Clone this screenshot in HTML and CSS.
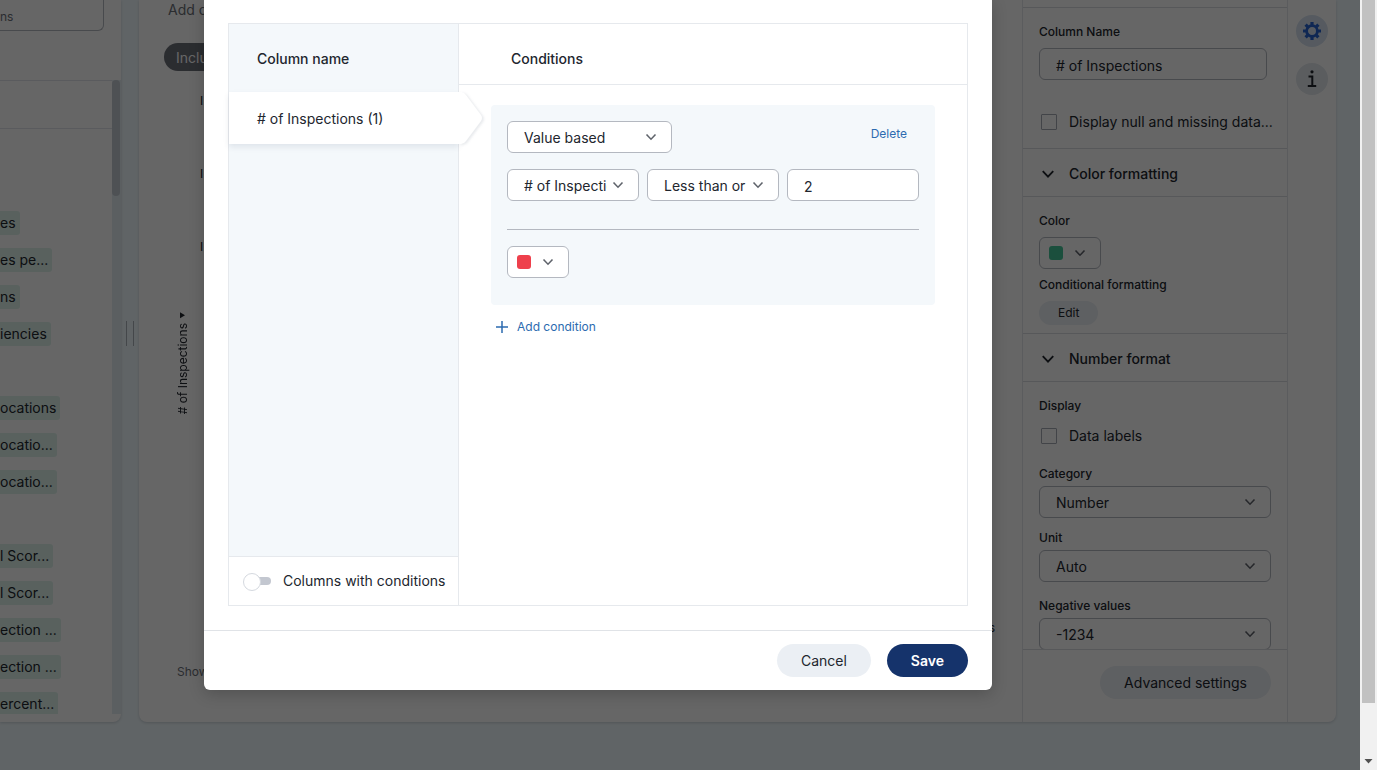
FILE: index.html
```html
<!DOCTYPE html>
<html lang="en">
<head>
    <meta charset="UTF-8">
    <meta name="viewport" content="width=device-width, initial-scale=1.0">
    <title>Conditional formatting</title>
    <link rel="stylesheet" href="styles.css">
</head>
<body>
    <svg class="symbols" aria-hidden="true">
        <symbol id="chevron" viewBox="0 0 12 12">
            <path d="M1.5 3.5L6 8.2L10.5 3.5" fill="none" stroke="currentColor" stroke-width="1.6"/>
        </symbol>
    </svg>

    <div class="viewport">
        <div class="workspace">
            <aside class="fields">
                <div class="fields-search">
                    <input type="text" value="ns" aria-label="Search fields">
                </div>
                <div class="fields-body">
                    <div class="fields-list">
                        <div class="fields-group"></div>
                        <ul>
                            <li></li>
                            <li></li>
                            <li><span class="tag">es</span></li>
                            <li><span class="tag">es pe...</span></li>
                            <li><span class="tag">ns</span></li>
                            <li><span class="tag">iencies</span></li>
                            <li></li>
                            <li><span class="tag">ocations</span></li>
                            <li><span class="tag">ocatio...</span></li>
                            <li><span class="tag">ocatio...</span></li>
                            <li></li>
                            <li><span class="tag">l Scor...</span></li>
                            <li><span class="tag">l Scor...</span></li>
                            <li><span class="tag">ection ...</span></li>
                            <li><span class="tag">ection ...</span></li>
                            <li><span class="tag">ercent...</span></li>
                        </ul>
                    </div>
                    <div class="fields-scroll"><div class="fields-thumb"></div></div>
                </div>
            </aside>

            <div class="splitter"><span></span></div>

            <main class="panel">
                <div class="chart">
                    <div class="chart-filter">Add c</div>
                    <div class="chart-chip">Inclu</div>
                    <div class="chart-plot">
                        <div class="axis-title"># of Inspections
                            <svg width="8" height="8" viewBox="0 0 8 8"><path d="M7 1V7L2 4Z" fill="currentColor"/></svg>
                        </div>
                        <div class="axis-ticks">
                            <span>I</span>
                            <span>I</span>
                            <span>I</span>
                        </div>
                        <div class="axis-end">s</div>
                    </div>
                    <div class="chart-footer">Show</div>
                </div>

                <section class="settings">
                    <div class="settings-scroll">
                        <div class="settings-section">
                            <label class="label" for="colname">Column Name</label>
                            <input class="input" id="colname" type="text" value="# of Inspections">
                            <label class="check check-null"><input type="checkbox"><span>Display null and missing data...</span></label>
                        </div>
                        <button class="settings-head"><svg width="14" height="14"><use href="#chevron"/></svg>Color formatting</button>
                        <div class="settings-section color-section">
                            <span class="label">Color</span>
                            <button class="color-select" aria-label="Color"><i class="swatch green"></i><svg width="12" height="12"><use href="#chevron"/></svg></button>
                            <span class="label">Conditional formatting</span>
                            <button class="pill pill-small">Edit</button>
                        </div>
                        <button class="settings-head"><svg width="14" height="14"><use href="#chevron"/></svg>Number format</button>
                        <div class="settings-section number-section">
                            <span class="label">Display</span>
                            <label class="check"><input type="checkbox"><span>Data labels</span></label>
                            <label class="label" for="category">Category</label>
                            <div class="select">
                                <select id="category"><option>Number</option></select>
                                <svg width="12" height="12"><use href="#chevron"/></svg>
                            </div>
                            <label class="label" for="unit">Unit</label>
                            <div class="select">
                                <select id="unit"><option>Auto</option></select>
                                <svg width="12" height="12"><use href="#chevron"/></svg>
                            </div>
                            <label class="label label-gap" for="negative">Negative values</label>
                            <div class="select">
                                <select id="negative"><option>-1234</option></select>
                                <svg width="12" height="12"><use href="#chevron"/></svg>
                            </div>
                        </div>
                    </div>
                    <div class="settings-footer">
                        <button class="pill">Advanced settings</button>
                    </div>
                </section>

                <nav class="rail">
                    <button class="rail-button active" aria-label="Settings">
                        <svg width="20" height="20" viewBox="0 0 20 20" fill="none" stroke="currentColor">
                            <circle cx="10" cy="10" r="5.4" stroke-width="2.8"/>
                            <g stroke-width="3.2">
                                <path d="M10 1V4M10 16V19M1 10H4M16 10H19"/>
                                <path d="M3.6 3.6L5.8 5.8M14.2 14.2L16.4 16.4M3.6 16.4L5.8 14.2M14.2 5.8L16.4 3.6"/>
                            </g>
                        </svg>
                    </button>
                    <button class="rail-button" aria-label="Information">
                        <svg width="20" height="20" viewBox="0 0 20 20">
                            <circle cx="10" cy="2.8" r="1.6" fill="currentColor"/>
                            <path d="M6.5 7.5H10.3V17M5.8 17H14.2" fill="none" stroke="currentColor" stroke-width="2"/>
                        </svg>
                    </button>
                </nav>
            </main>
        </div>

        <div class="overlay">
            <div class="modal" role="dialog" aria-label="Conditional formatting">
                <div class="modal-body">
                    <div class="rules">
                        <div class="columns">
                            <h3 class="columns-title">Column name</h3>
                            <button class="column-item"># of Inspections (1)
                                <svg class="column-arrow" width="26" height="52" viewBox="0 0 26 52"><path d="M0 0H2Q5 0 7 3L22 23Q24 26 22 29L7 49Q5 52 2 52H0Z" fill="#fff"/></svg>
                            </button>
                            <label class="columns-toggle">
                                <input type="checkbox" class="toggle">
                                Columns with conditions
                            </label>
                        </div>
                        <div class="conditions">
                            <h3 class="conditions-title">Conditions</h3>
                            <div class="condition">
                                <div class="condition-top">
                                    <div class="select select-type">
                                        <select aria-label="Condition type"><option>Value based</option></select>
                                        <svg width="12" height="12"><use href="#chevron"/></svg>
                                    </div>
                                    <a class="link" href="#">Delete</a>
                                </div>
                                <div class="condition-row">
                                    <div class="select">
                                        <select aria-label="Column"><option># of Inspections</option></select>
                                        <svg width="12" height="12"><use href="#chevron"/></svg>
                                    </div>
                                    <div class="select">
                                        <select aria-label="Operator"><option>Less than or equal to</option></select>
                                        <svg width="12" height="12"><use href="#chevron"/></svg>
                                    </div>
                                    <input class="input" type="text" value="2" aria-label="Value">
                                </div>
                                <hr>
                                <button class="color-select" aria-label="Condition color"><i class="swatch red"></i><svg width="12" height="12"><use href="#chevron"/></svg></button>
                            </div>
                            <a class="link add" href="#">
                                <svg width="12" height="12" viewBox="0 0 12 12"><path d="M6 0V12M0 6H12" stroke="currentColor" stroke-width="1.5"/></svg>
                                Add condition
                            </a>
                        </div>
                    </div>
                </div>
                <div class="modal-footer">
                    <button class="pill">Cancel</button>
                    <button class="pill pill-primary">Save</button>
                </div>
            </div>
        </div>
    </div>

    <div class="page-scroll">
        <div class="page-thumb"></div>
        <svg width="9" height="5" viewBox="0 0 9 5"><path d="M0.5 0H8.5L4.5 4.5Z" fill="#505050"/></svg>
    </div>
</body>
</html>
```
FILE: styles.css
```css
* {
    box-sizing: border-box;
}
body {
    margin: 0;
    height: 100vh;
    display: flex;
    overflow: hidden;
    font-family: Inter, "Liberation Sans", sans-serif;
    font-size: 14px;
    line-height: 20px;
    color: #22262e;
}
button, input, select {
    font: inherit;
    color: inherit;
    margin: 0;
}
button {
    border: none;
    background: none;
    padding: 0;
    cursor: pointer;
}
ul {
    list-style: none;
    margin: 0;
    padding: 0;
}
h3 {
    margin: 0;
    font-size: 14px;
    font-weight: 500;
}
.symbols {
    position: absolute;
    width: 0;
    height: 0;
}
.viewport {
    flex: 1;
    min-width: 0;
    position: relative;
}
.workspace {
    height: 100%;
    display: flex;
    padding: 0 24px 48px 0;
    background: #f1fafe;
}

/* shared controls */
.input, .select select {
    width: 100%;
    height: 32px;
    padding: 2px 16px 0;
    border: 1px solid #b4b8c0;
    border-radius: 6px;
    background: #fff;
}
.select {
    position: relative;
}
.select select {
    display: block;
    appearance: none;
    padding-right: 31px;
}
.select svg {
    position: absolute;
    right: 15px;
    top: 10px;
    color: #5f636b;
    pointer-events: none;
}
.color-select {
    display: flex;
    align-items: center;
    gap: 11px;
    width: 62px;
    height: 32px;
    padding-left: 9px;
    border: 1px solid #b4b8c0;
    border-radius: 6px;
    background: #fff;
    color: #5f636b;
}
.swatch {
    width: 14px;
    height: 14px;
    border-radius: 3px;
}
.red {
    background: #ee404c;
}
.green {
    background: #45c598;
}
.pill {
    height: 33px;
    padding: 0 24px;
    border-radius: 17px;
    background: #ebeff4;
}
.pill-small {
    align-self: flex-start;
    height: 24px;
    padding: 0 19px;
    font-size: 12px;
}
.pill-primary {
    background: #15336b;
    color: #fff;
    font-weight: 600;
}
.link {
    color: #2c6bb0;
    font-size: 12px;
    text-decoration: none;
}

/* field list */
.fields {
    width: 121px;
    display: flex;
    flex-direction: column;
    background: #fff;
    border-radius: 0 0 8px 0;
    box-shadow: 0 1px 3px #c8d2da;
    overflow: hidden;
}
.fields-search {
    height: 80px;
    padding-right: 17px;
}
.fields-search input {
    width: 100%;
    height: 31px;
    padding: 2px 0 0;
    border: 1px solid #b4b8c0;
    border-width: 0 1px 1px 0;
    border-radius: 0 0 6px 0;
    background: #fff;
    color: #6b7078;
    font-size: 12px;
}
.fields-body {
    flex: 1;
    min-height: 0;
    display: flex;
    padding-bottom: 8px;
}
.fields-list {
    flex: 1;
    overflow: hidden;
    border-top: 1px solid #e0e4ea;
}
.fields-group {
    height: 48px;
    border-bottom: 1px solid #e0e4ea;
    margin-bottom: 1px;
}
.fields-list li {
    height: 37px;
    display: flex;
    align-items: center;
}
.tag {
    padding: 2px 4px 2px 0;
    border-radius: 0 3px 3px 0;
    background: #def3ec;
}
.fields-scroll {
    width: 9px;
    background: #e3edf3;
}
.fields-thumb {
    width: 8px;
    height: 116px;
    border-radius: 4px;
    background: #c3cbd2;
}
.splitter {
    width: 18px;
    display: flex;
    align-items: center;
    justify-content: center;
    padding-bottom: 56px;
}
.splitter span {
    width: 8px;
    height: 25px;
    border: 1px solid #aab2b8;
    border-width: 0 1px;
}

/* chart panel */
.panel {
    flex: 1;
    min-width: 0;
    display: flex;
    background: #fff;
    border-radius: 0 0 8px 8px;
    box-shadow: 0 1px 3px #c8d2da;
}
.chart {
    flex: 1;
    display: flex;
    flex-direction: column;
    align-items: flex-start;
    padding-bottom: 40px;
}
.chart-filter {
    padding-left: 29px;
    color: #6b7078;
}
.chart-chip {
    height: 28px;
    margin: 23px 0 0 25px;
    padding: 5px 12px;
    border-radius: 14px;
    background: #6c7079;
    color: #fff;
}
.chart-plot {
    flex: 1;
    align-self: stretch;
    display: flex;
    align-items: center;
    font-size: 12px;
}
.axis-title {
    display: flex;
    align-items: center;
    gap: 4px;
    margin: 0 0 8px 34px;
    writing-mode: vertical-rl;
    transform: rotate(180deg);
}
.axis-ticks {
    align-self: flex-start;
    display: flex;
    flex-direction: column;
    gap: 53px;
    margin: 20px 0 0 7px;
}
.axis-end {
    align-self: flex-end;
    margin: 0 27px 24px auto;
}
.chart-footer {
    padding-left: 38px;
    color: #6b7078;
    font-size: 12px;
}

/* settings */
.settings {
    width: 266px;
    display: flex;
    flex-direction: column;
    border: 1px solid #e3e6ea;
    border-width: 0 1px;
}
.settings-scroll {
    flex: 1;
    min-height: 0;
    padding-top: 7px;
    overflow: hidden;
}
.settings-section {
    display: flex;
    flex-direction: column;
    padding: 16px;
    border-top: 1px solid #d9dde2;
}
.settings-section .input {
    width: auto;
    margin: 8px 4px 0 0;
}
.label {
    font-size: 12px;
    line-height: 16px;
    font-weight: 500;
}
.check {
    display: flex;
    align-items: center;
    gap: 12px;
}
.check input {
    appearance: none;
    flex: none;
    width: 16px;
    height: 16px;
    margin-left: 2px;
    border: 1px solid #a6abb3;
    border-radius: 1px;
    background: #fff;
}
.check span {
    white-space: nowrap;
}
.check-null {
    margin-top: 32px;
}
.settings-head {
    display: flex;
    align-items: center;
    gap: 14px;
    width: 100%;
    height: 48px;
    padding: 2px 18px 0;
    border-top: 1px solid #d9dde2;
    font-weight: 500;
}
.color-section {
    gap: 8px;
    padding-bottom: 8px;
}
.number-section .check {
    margin: 12px 0 8px;
}
.number-section .label + .select {
    margin-top: 4px;
}
.number-section .check + .label,
.number-section .select + .label {
    margin-top: 12px;
}
.number-section .select + .label-gap {
    margin-top: 16px;
}
.settings-footer {
    display: flex;
    justify-content: flex-end;
    padding: 16px 16px 23px;
    border-top: 1px solid #d9dde2;
}
.rail {
    width: 48px;
    display: flex;
    flex-direction: column;
    align-items: center;
    gap: 16px;
    padding-top: 15px;
}
.rail-button {
    display: flex;
    align-items: center;
    justify-content: center;
    width: 32px;
    height: 32px;
    border-radius: 50%;
    background: #e3e8ed;
}
.rail-button.active {
    background: #d6e2f0;
    color: #2763d0;
}

/* modal */
.overlay {
    position: absolute;
    inset: 0;
    display: flex;
    padding: 0 16px 80px 204px;
    background: rgba(0, 0, 0, 0.6);
}
.modal {
    flex: 1;
    max-width: 788px;
    display: flex;
    flex-direction: column;
    background: #fff;
    border-radius: 0 0 6px 6px;
    box-shadow: 0 4px 16px rgba(0, 0, 0, 0.2);
}
.modal-body {
    flex: 1;
    display: flex;
    padding: 23px 24px 24px;
}
.rules {
    flex: 1;
    display: flex;
    border: 1px solid #e6e9ed;
}
.columns {
    width: 230px;
    display: flex;
    flex-direction: column;
    background: #f4f8fb;
    border-right: 1px solid #e6e9ed;
}
.columns-title {
    padding: 25px 28px 23px;
}
.column-item {
    position: relative;
    height: 52px;
    margin-right: -1px;
    padding: 2px 28px 0;
    background: #fff;
    text-align: left;
    box-shadow: 0 3px 6px rgba(40, 60, 90, 0.1);
}
.column-arrow {
    position: absolute;
    left: 100%;
    top: 0;
    filter: drop-shadow(2px 1px 1px rgba(40, 60, 90, 0.1));
}
.columns-toggle {
    display: flex;
    align-items: center;
    gap: 12px;
    height: 49px;
    margin-top: auto;
    padding-left: 14px;
    background: #fff;
    border-top: 1px solid #e6e9ed;
    white-space: nowrap;
}
.toggle {
    appearance: none;
    position: relative;
    width: 28px;
    height: 8px;
    border-radius: 4px;
    background: linear-gradient(90deg, transparent 8px, #c3c7d0 8px);
}
.toggle::before {
    content: "";
    position: absolute;
    left: 0;
    top: -4px;
    width: 16px;
    height: 16px;
    border: 1px solid #d5d9df;
    border-radius: 50%;
    background: #fff;
}
.conditions {
    flex: 1;
    min-width: 0;
}
.conditions-title {
    padding: 25px 52px 15px;
    border-bottom: 1px solid #e6e9ed;
}
.condition {
    margin: 20px 32px 0;
    padding: 16px 16px 27px;
    border-radius: 4px;
    background: #f4f8fb;
}
.condition-top {
    display: flex;
    align-items: flex-start;
    justify-content: space-between;
    padding-right: 12px;
}
.condition-top .link {
    margin-top: 3px;
}
.select-type {
    width: 165px;
}
.condition-row {
    display: grid;
    grid-template-columns: repeat(3, minmax(0, 1fr));
    gap: 8px;
    margin-top: 16px;
}
hr {
    margin: 28px 0 16px;
    border: none;
    border-top: 1px solid #b4b8c0;
}
.add {
    display: inline-flex;
    align-items: center;
    gap: 9px;
    margin: 12px 0 0 37px;
}
.modal-footer {
    display: flex;
    justify-content: flex-end;
    gap: 16px;
    padding: 13px 24px;
    border-top: 1px solid #e0e3e7;
}

/* page scrollbar */
.page-scroll {
    width: 17px;
    display: flex;
    flex-direction: column;
    align-items: center;
    justify-content: space-between;
    padding-bottom: 6px;
    background: #f1f1f1;
}
.page-thumb {
    width: 13px;
    height: 92%;
    background: #c1c1c1;
}
```
